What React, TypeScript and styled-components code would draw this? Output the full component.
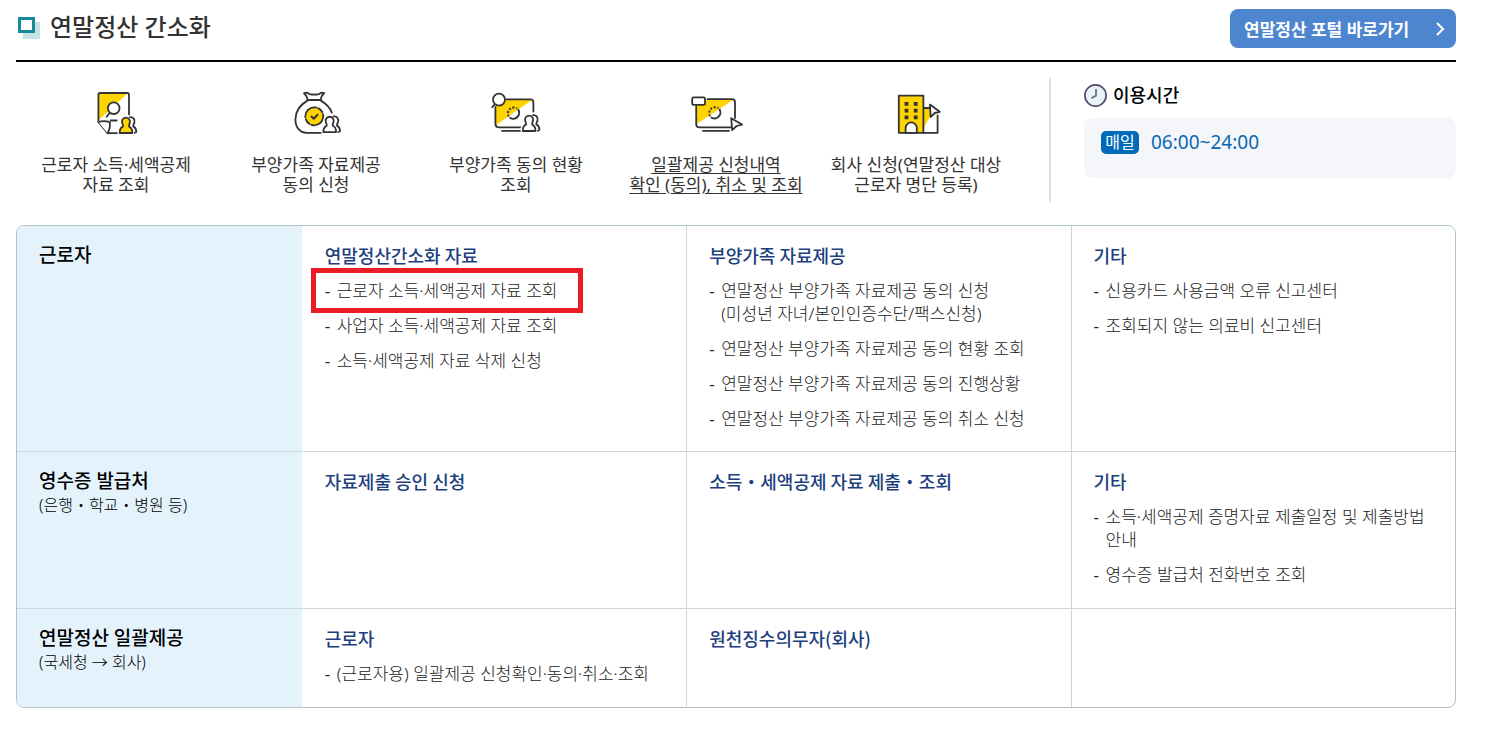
import React from "react";
import styled, { createGlobalStyle } from "styled-components";

const GlobalStyle = createGlobalStyle`
  *, *::before, *::after { box-sizing: border-box; }
  body {
    margin: 0;
    background: #fff;
    color: #333;
    font-family: "Noto Sans", "Noto Sans CJK KR", sans-serif;
    font-size: 17px;
    word-break: keep-all;
  }
  h1, h2, h3, p, ul { margin: 0; padding: 0; }
  ul { list-style: none; }
  a { color: inherit; text-decoration: none; }
`;

const Page = styled.main`
  padding: 9px 29px 20px 16px;
`;

const Header = styled.header`
  display: flex;
  align-items: flex-start;
  justify-content: space-between;
  height: 53px;
  border-bottom: 2px solid #000;
`;

const Title = styled.h1`
  display: flex;
  align-items: center;
  gap: 10px;
  padding-left: 1px;
  font-size: 24px;
  line-height: 36px;
  font-weight: 500;
`;

const PortalButton = styled.button`
  display: flex;
  align-items: center;
  justify-content: space-between;
  width: 226px;
  height: 39px;
  padding: 0 10px 0 14px;
  border: 0;
  border-radius: 8px;
  background: #4d86cf;
  color: #fff;
  font-family: inherit;
  font-size: 17px;
  font-weight: 700;
  cursor: pointer;
`;

const Overview = styled.section`
  display: grid;
  grid-template-columns: 1035fr 405fr;
  padding: 16px 0 23px;
`;

const Services = styled.ul`
  display: grid;
  grid-template-columns: repeat(5, 1fr);
  padding: 13px 33px 7px 0;
  border-right: 2px solid #ddd;
`;

const ServiceLink = styled.a<{ $active?: boolean }>`
  display: flex;
  flex-direction: column;
  align-items: center;
  gap: 20px;
  line-height: 20px;
  text-align: center;
  white-space: nowrap;
  text-decoration: ${(p) => (p.$active ? "underline" : "none")};
  text-underline-offset: 2px;
`;

const IconSvg = styled.svg`
  display: block;
  overflow: visible;
`;

const Hours = styled.div`
  padding: 4px 0 0 33px;
`;

const HoursTitle = styled.h2`
  display: flex;
  align-items: center;
  gap: 6px;
  color: #000;
  font-size: 18px;
  line-height: 26px;
  font-weight: 500;
`;

const HoursPanel = styled.div`
  display: flex;
  align-items: flex-start;
  gap: 12px;
  height: 60px;
  margin-top: 10px;
  padding: 13px 17px;
  border-radius: 8px;
  background: #f4f6f9;
`;

const DayBadge = styled.span`
  width: 38px;
  border-radius: 5px;
  background: #006bb9;
  color: #fff;
  font-size: 16px;
  line-height: 23px;
  text-align: center;
`;

const HoursText = styled.p`
  color: #0a68b4;
  font-size: 19px;
  line-height: 23px;
`;

const MenuTable = styled.table`
  width: 100%;
  table-layout: fixed;
  border: 1px solid #b0c4c8;
  border-radius: 8px;
  border-collapse: separate;
  border-spacing: 0;
  overflow: hidden;
`;

const HeadColumn = styled.col`
  width: 19.8%;
`;

const RowHead = styled.th`
  padding: 16px 22px 21px;
  background: #e4f3fb;
  color: #000;
  text-align: left;
  vertical-align: top;
  font-weight: 500;
  font-size: 19px;
  line-height: 26px;
  tr + tr > & { border-top: 1px solid #ccd8dd; }
`;

const RowNote = styled.p`
  font-size: 16px;
  line-height: 22px;
  font-weight: 300;
`;

const Cell = styled.td`
  padding: 16px 22px 21px;
  vertical-align: top;
  & + & { border-left: 1px solid #d0d6d8; }
  th + & { padding-left: 23px; }
  tr + tr > & {
    padding-bottom: 22px;
    border-top: 1px solid #d0d6d8;
  }
`;

const CellTitle = styled.h3`
  color: #1d3f7e;
  font-family: "Noto Sans CJK KR", sans-serif;
  font-size: 18px;
  line-height: 26px;
  font-weight: 500;
`;

const LinkList = styled.ul`
  display: grid;
  gap: 12px;
  margin-top: 11px;
  color: #222;
  line-height: 23px;
  font-weight: 300;
`;

const LinkItem = styled.li`
  position: relative;
  display: flex;
`;

const Dash = styled.span`
  flex: 0 0 12px;
  font-weight: 400;
`;

const Highlight = styled.span`
  position: absolute;
  inset: -11px auto -11px -14px;
  width: 272px;
  border: 5px solid #ec1c24;
  pointer-events: none;
`;

const INK = "#333";
const YELLOW = "#fdd400";

const Icon = ({ children }: { children: React.ReactNode }) => (
  <IconSvg width="48" height="44" viewBox="0 0 48 44" fill="none" stroke={INK} strokeWidth="1.8" strokeLinecap="round" strokeLinejoin="round" aria-hidden="true">
    {children}
  </IconSvg>
);

const PAWN = "M.4 16.4C.2 12.8 1.2 11 3.6 10C4.2 8.8 3 7.6 2.7 5.6A4 4 0 1 1 10.6 5.6C10.4 7.6 9.2 8.8 9.8 10C12 11 13.2 12.8 13 16.4Z";

const People = ({ x, y, fill }: { x: number; y: number; fill: string }) => (
  <g transform={`translate(${x} ${y})`}>
    <path d={PAWN} fill="#fff" stroke="#fff" strokeWidth="4.5" />
    <path d="M10.6 .6C14 .2 16 3 15 6.3C14.5 7.8 13.6 8.6 14 9.8C16 10.8 17 12.6 17 15.4L15.4 16.2" />
    <path d={PAWN} fill={fill} />
  </g>
);

const Ring = ({ x, y }: { x: number; y: number }) => (
  <g transform={`translate(${x} ${y})`} strokeLinecap="butt">
    <path d="M4.2 -4.2A6 6 0 0 1 -4.2 4.2" strokeWidth="2" />
    <path d="M-5 3.2A6 6 0 0 1 3.2 -5" strokeWidth="2" strokeDasharray="2 1.6" />
  </g>
);

const DocumentIcon = () => (
  <Icon>
    <path d="M6.3 2H36L6.3 29.5Z" fill={YELLOW} stroke="none" />
    <path d="M37 23.5V3.8Q37 2 35.2 2H8.2Q6.4 2 6.4 3.8V31L15.6 42.2H29" />
    <path d="M6.4 31Q12 29.2 17.8 31.2Q18.6 37 15.6 42.2" fill="#fff" />
    <path d="M17.7 21.8L14.7 25.7M18.7 29.5H24.7" />
    <circle cx="21.7" cy="17.2" r="5.8" fill="#fff" />
    <People x={27.3} y={25.6} fill={YELLOW} />
  </Icon>
);

const BagIcon = () => (
  <Icon>
    <path d="M15.6 9C15.2 5.8 13.8 3.6 12 2.2Q15.4 1 17.4 3.2Q22.2 4.2 27 3.2Q29.4 1 32.2 2.2C30.4 3.8 29 6 28.8 9Z" />
    <path d="M15.4 9.6C9.6 13 3.4 19.4 3.4 28.4C3.4 36.6 8.4 41.8 14.4 41.8H30M28.8 9.6C34 12.6 38 16.6 39.8 21.6" />
    <circle cx="22.3" cy="25.3" r="9" fill={YELLOW} strokeDasharray="17 2 6 2" />
    <path d="M19.5 25.5L21.7 27.8L25.6 23.8" strokeWidth="2" />
    <People x={31} y={24.8} fill="#fff" />
  </Icon>
);

const StatusIcon = () => (
  <Icon>
    <path d="M4 9H40L4 34Z" fill={YELLOW} stroke="none" />
    <path d="M14.5 8.4H38.2Q41.4 8.4 41.4 11.6V20.6M3.4 16V32.4Q3.4 36.4 7.4 36.4H29" />
    <path d="M10 39.8H29" />
    <path d="M2.6 13.2L.2 16.2" />
    <circle cx="7" cy="8.6" r="6" fill="#fff" />
    <path d="M17.4 26.6L26 18.2A6 6 0 0 1 17.4 26.6Z" fill="#fff" stroke="none" />
    <Ring x={21.7} y={22.3} />
    <People x={30.4} y={23.6} fill="#fff" />
  </Icon>
);

const RequestIcon = () => (
  <Icon>
    <path d="M4.5 9H41L4.5 33Z" fill={YELLOW} stroke="none" />
    <path d="M15.5 8.2H39.8Q43 8.2 43 11.4V27M4.2 15.5V33Q4.2 36.4 7.6 36.4H39" />
    <path d="M11 39.8H37" />
    <rect x=".2" y="6.4" width="12.8" height="7.4" rx="1.6" fill="#fff" />
    <path d="M18.5 26.2L27.2 18A6 6 0 0 1 18.5 26.2Z" fill="#fff" stroke="none" />
    <Ring x={23} y={22} />
    <path d="M39.2 27.2L50 33.6L44.6 35L40.2 39.2Z" fill="#fff" />
  </Icon>
);

const CompanyIcon = () => (
  <Icon>
    <path d="M31.4 17H43L31.4 37Z" fill={YELLOW} stroke="none" />
    <path d="M31.4 17H38M45.6 24.4V41.8H31.4" />
    <path d="M6.8 4.6H31.4V41.8H6.8Z" fill={YELLOW} />
    <path d="M13.6 41.8V37A5.6 5.6 0 0 1 24.8 37V41.8Z" fill="#fff" />
    <path d="M12.6 11h3.8v3.8h-3.8zM21.8 11h3.8v3.8h-3.8zM12.6 17.8h3.8v3.8h-3.8zM21.8 17.8h3.8v3.8h-3.8zM12.6 24.4h3.8v3.8h-3.8zM21.8 24.4h3.8v3.8h-3.8z" fill={INK} stroke="none" />
    <path d="M38 13.6L47.8 20.8L42.8 22L38.6 26Z" fill="#fff" />
  </Icon>
);

const TitleMark = () => (
  <svg width="23" height="23" viewBox="0 0 23 23" aria-hidden="true">
    <path d="M6 6H23V23H6Z" fill="#c8e4e0" />
    <path d="M2.5 2.5H16.5V15.5H2.5Z" fill="#fff" stroke="#148a9c" strokeWidth="3" />
  </svg>
);

const ClockIcon = () => (
  <svg width="23" height="23" viewBox="0 0 23 23" fill="none" aria-hidden="true">
    <circle cx="11.5" cy="11.5" r="10.6" fill="#e8f2f8" stroke="#514a6d" strokeWidth="1.7" />
    <path d="M12 5V11.6L7.4 14.2" stroke="#68718c" strokeWidth="1.8" />
  </svg>
);

const Chevron = () => (
  <svg width="12" height="16" viewBox="0 0 12 16" fill="none" aria-hidden="true">
    <path d="M3 2L9 8L3 14" stroke="#fff" strokeWidth="2" />
  </svg>
);

const services = [
  { icon: <DocumentIcon />, lines: ["근로자 소득·세액공제", "자료 조회"] },
  { icon: <BagIcon />, lines: ["부양가족 자료제공", "동의 신청"] },
  { icon: <StatusIcon />, lines: ["부양가족 동의 현황", "조회"] },
  { icon: <RequestIcon />, lines: ["일괄제공 신청내역", "확인 (동의), 취소 및 조회"], active: true },
  { icon: <CompanyIcon />, lines: ["회사 신청(연말정산 대상", "근로자 명단 등록)"] },
];

type Group = { title?: string; links?: string[]; marked?: number };
type Row = { name: string; note?: string; groups: Group[] };

const rows: Row[] = [
  {
    name: "근로자",
    groups: [
      {
        title: "연말정산간소화 자료",
        links: ["근로자 소득·세액공제 자료 조회", "사업자 소득·세액공제 자료 조회", "소득·세액공제 자료 삭제 신청"],
        marked: 0,
      },
      {
        title: "부양가족 자료제공",
        links: [
          "연말정산 부양가족 자료제공 동의 신청\n(미성년 자녀/본인인증수단/팩스신청)",
          "연말정산 부양가족 자료제공 동의 현황 조회",
          "연말정산 부양가족 자료제공 동의 진행상황",
          "연말정산 부양가족 자료제공 동의 취소 신청",
        ],
      },
      { title: "기타", links: ["신용카드 사용금액 오류 신고센터", "조회되지 않는 의료비 신고센터"] },
    ],
  },
  {
    name: "영수증 발급처",
    note: "(은행・학교・병원 등)",
    groups: [
      { title: "자료제출 승인 신청" },
      { title: "소득・세액공제 자료 제출・조회" },
      { title: "기타", links: ["소득·세액공제 증명자료 제출일정 및 제출방법\n안내", "영수증 발급처 전화번호 조회"] },
    ],
  },
  {
    name: "연말정산 일괄제공",
    note: "(국세청 → 회사)",
    groups: [
      { title: "근로자", links: ["(근로자용) 일괄제공 신청확인·동의·취소·조회"] },
      { title: "원천징수의무자(회사)" },
      {},
    ],
  },
];

const Lines = ({ lines }: { lines: string[] }) => (
  <span>
    {lines.map((line, i) => (
      <React.Fragment key={line}>
        {i > 0 && <br />}
        {line}
      </React.Fragment>
    ))}
  </span>
);

export default function App() {
  return (
    <>
      <GlobalStyle />
      <Page>
        <Header>
          <Title>
            <TitleMark />
            연말정산 간소화
          </Title>
          <PortalButton type="button">
            연말정산 포털 바로가기
            <Chevron />
          </PortalButton>
        </Header>

        <Overview>
          <Services>
            {services.map((s) => (
              <li key={s.lines[0]}>
                <ServiceLink href="#" $active={s.active}>
                  {s.icon}
                  <Lines lines={s.lines} />
                </ServiceLink>
              </li>
            ))}
          </Services>
          <Hours>
            <HoursTitle>
              <ClockIcon />
              이용시간
            </HoursTitle>
            <HoursPanel>
              <DayBadge>매일</DayBadge>
              <HoursText>06:00~24:00</HoursText>
            </HoursPanel>
          </Hours>
        </Overview>

        <MenuTable>
          <colgroup>
            <HeadColumn />
            <col />
            <col />
            <col />
          </colgroup>
          <tbody>
            {rows.map((row) => (
              <tr key={row.name}>
                <RowHead scope="row">
                  {row.name}
                  {row.note && <RowNote>{row.note}</RowNote>}
                </RowHead>
                {row.groups.map((group, g) => (
                  <Cell key={g}>
                    {group.title && <CellTitle>{group.title}</CellTitle>}
                    {group.links && (
                      <LinkList>
                        {group.links.map((link, i) => (
                          <LinkItem key={link}>
                            <Dash>-</Dash>
                            <a href="#">
                              <Lines lines={link.split("\n")} />
                            </a>
                            {group.marked === i && <Highlight />}
                          </LinkItem>
                        ))}
                      </LinkList>
                    )}
                  </Cell>
                ))}
              </tr>
            ))}
          </tbody>
        </MenuTable>
      </Page>
    </>
  );
}
